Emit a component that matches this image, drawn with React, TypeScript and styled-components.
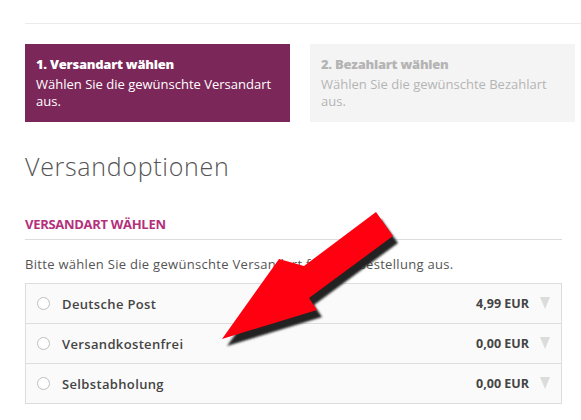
import React from "react";
import styled, { createGlobalStyle } from "styled-components";

const GlobalStyle = createGlobalStyle`
  html, body {
    margin: 0;
    padding: 0;
    background: #ffffff;
  }
  body {
    font-family: "Open Sans", "Liberation Sans", sans-serif;
    color: #555555;
  }
`;

const options = [
  { name: "Deutsche Post", price: "4,99 EUR" },
  { name: "Versandkostenfrei", price: "0,00 EUR" },
  { name: "Selbstabholung", price: "0,00 EUR" },
];

const App = () => {
  return (
    <>
      <GlobalStyle />
      <Page>
        <TopRule />
        <Steps>
          <StepBox $active>
            <StepTitle>1. Versandart wählen</StepTitle>
            <StepText>Wählen Sie die gewünschte Versandart aus.</StepText>
          </StepBox>
          <StepBox>
            <StepTitle>2. Bezahlart wählen</StepTitle>
            <StepText>Wählen Sie die gewünschte Bezahlart aus.</StepText>
          </StepBox>
        </Steps>
        <Content>
          <Heading>Versandoptionen</Heading>
          <SectionTitle>VERSANDART WÄHLEN</SectionTitle>
          <Intro>
            Bitte wählen Sie die gewünschte Versandart für Ihre Bestellung aus.
          </Intro>
          <OptionList>
            {options.map((o) => (
              <OptionRow key={o.name}>
                <Radio />
                <OptionName>{o.name}</OptionName>
                <Price>{o.price}</Price>
                <Caret />
              </OptionRow>
            ))}
          </OptionList>
        </Content>
        <ArrowOverlay viewBox="0 0 581 420" width="581" height="420">
          <defs>
            <filter id="arrowBlur" x="-20%" y="-20%" width="140%" height="140%">
              <feGaussianBlur stdDeviation="1.3" />
            </filter>
          </defs>
          <polygon
            points="376,212 304,266 279,259 222,339 317,310 309,298 393,236"
            fill="#222"
            transform="translate(5 7)"
            filter="url(#arrowBlur)"
          />
          <polygon
            points="376,212 304,266 279,259 222,339 317,310 309,298 393,236"
            fill="#ff0010"
          />
        </ArrowOverlay>
      </Page>
    </>
  );
};

export default App;

const Page = styled.div`
  position: relative;
  width: 581px;
  height: 420px;
  box-sizing: border-box;
  padding: 23px 0 0 25px;
  overflow: hidden;
`;

const TopRule = styled.div`
  height: 1px;
  background: #ebebeb;
`;

const Steps = styled.div`
  display: flex;
  gap: 20px;
  width: 551px;
  margin-top: 20px;
`;

const StepBox = styled.div<{ $active?: boolean }>`
  width: 265px;
  height: 78px;
  box-sizing: border-box;
  padding: 11px 11px 0;
  background: ${(p) => (p.$active ? "#7b2759" : "#f4f4f4")};
  color: ${(p) => (p.$active ? "#ffffff" : "#b4b4b4")};
`;

const StepTitle = styled.div`
  font-size: 13px;
  font-weight: 800;
  line-height: 18px;
  letter-spacing: -0.25px;
`;

const StepText = styled.div`
  margin-top: 3px;
  font-size: 13px;
  font-weight: 400;
  line-height: 17px;
`;

const Content = styled.div`
  width: 537px;
  display: flex;
  flex-direction: column;
`;

const Heading = styled.h1`
  margin: 28px 0 0;
  font-size: 25px;
  font-weight: 300;
  line-height: 32px;
  color: #555555;
  letter-spacing: 0.7px;
`;

const SectionTitle = styled.h2`
  margin: 33px 0 0;
  padding-bottom: 6px;
  border-bottom: 1px solid #dddddd;
  font-size: 13px;
  font-weight: 700;
  line-height: 18px;
  letter-spacing: -0.3px;
  color: #b5307a;
`;

const Intro = styled.p`
  margin: 15px 0 0;
  font-size: 13px;
  line-height: 18px;
  letter-spacing: 0.3px;
  color: #555555;
`;

const OptionList = styled.div`
  margin-top: 10px;
  border: 1px solid #dddddd;
  background: #fafafa;
`;

const OptionRow = styled.div`
  display: flex;
  align-items: center;
  height: 39px;
  padding: 0 11px;
  & + & {
    border-top: 1px solid #dddddd;
  }
`;

const Radio = styled.span`
  width: 13px;
  height: 13px;
  box-sizing: border-box;
  border: 1.5px solid #bfbfbf;
  border-radius: 50%;
  background: #ffffff;
  flex: none;
`;

const OptionName = styled.span`
  margin-left: 12px;
  flex: 1;
  font-size: 13px;
  font-weight: 600;
  letter-spacing: 0.35px;
  color: #444444;
`;

const Price = styled.span`
  font-size: 12.5px;
  font-weight: 700;
  color: #444444;
`;

const Caret = styled.span`
  margin-left: 11px;
  width: 0;
  height: 0;
  border-left: 5.5px solid transparent;
  border-right: 5.5px solid transparent;
  border-top: 12px solid #dcdcdc;
  margin-top: -2px;
`;

const ArrowOverlay = styled.svg`
  position: absolute;
  left: 0;
  top: 0;
  pointer-events: none;
`;
